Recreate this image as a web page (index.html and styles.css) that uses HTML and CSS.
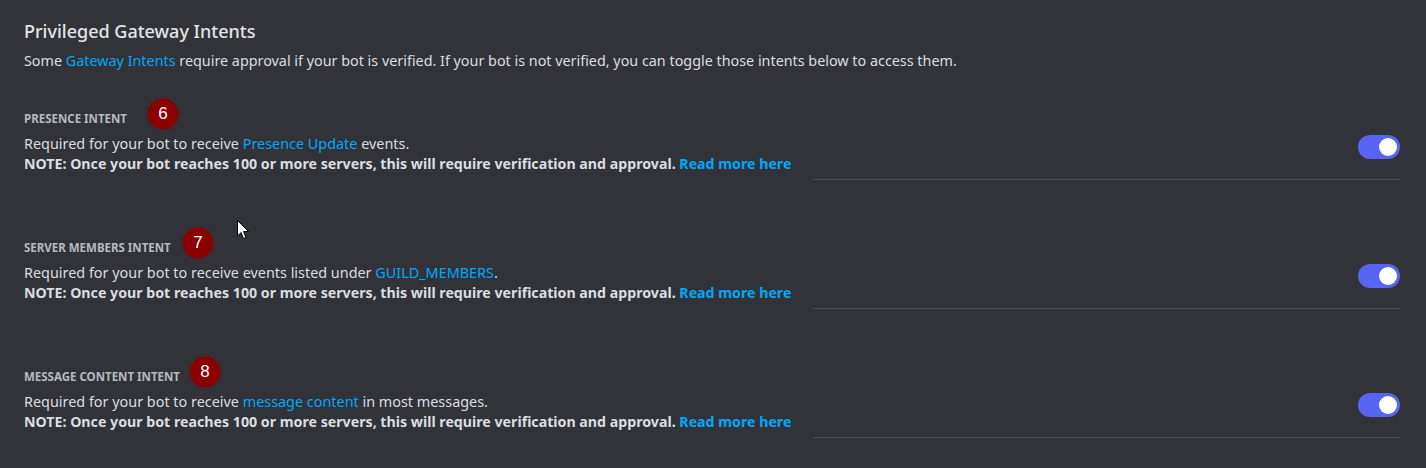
FILE: index.html
```html
<!DOCTYPE html>
<html lang="en">
<head>
<meta charset="utf-8">
<title>Privileged Gateway Intents</title>
<link rel="stylesheet" href="styles.css">
</head>
<body>
<main class="page">
  <h2 class="title">Privileged Gateway Intents</h2>
  <p class="intro">Some <a class="link" href="#">Gateway Intents</a> require approval if your bot is verified. If your bot is not verified, you can toggle those intents below to access them.</p>

  <section class="intent">
    <div class="intent-head"><span class="label">PRESENCE INTENT</span><span class="badge badge-6">6</span></div>
    <div class="intent-row">
      <div class="intent-text">
        <div>Required for your bot to receive <a class="link" href="#">Presence Update</a> events.</div>
        <div class="note">NOTE: Once your bot reaches 100 or more servers, this will require verification and approval. <a class="link strong" href="#">Read more here</a></div>
      </div>
      <span class="toggle"><span class="knob"></span></span>
    </div>
    <div class="divider"></div>
  </section>

  <section class="intent">
    <div class="intent-head"><span class="label">SERVER MEMBERS INTENT</span><span class="badge badge-7">7</span></div>
    <div class="intent-row">
      <div class="intent-text">
        <div>Required for your bot to receive events listed under <a class="link" href="#">GUILD_MEMBERS</a>.</div>
        <div class="note">NOTE: Once your bot reaches 100 or more servers, this will require verification and approval. <a class="link strong" href="#">Read more here</a></div>
      </div>
      <span class="toggle"><span class="knob"></span></span>
    </div>
    <div class="divider"></div>
  </section>

  <section class="intent">
    <div class="intent-head"><span class="label">MESSAGE CONTENT INTENT</span><span class="badge badge-8">8</span></div>
    <div class="intent-row">
      <div class="intent-text">
        <div>Required for your bot to receive <a class="link" href="#">message content</a> in most messages.</div>
        <div class="note">NOTE: Once your bot reaches 100 or more servers, this will require verification and approval. <a class="link strong" href="#">Read more here</a></div>
      </div>
      <span class="toggle"><span class="knob"></span></span>
    </div>
    <div class="divider"></div>
  </section>

  <svg class="cursor" width="13" height="20" viewBox="0 0 13 20" aria-hidden="true">
    <path d="M0.5 0.5 L0.5 16 L4 12.5 L6.5 18.5 L9 17.5 L6.5 11.5 L11.5 11.5 Z" fill="#ffffff" stroke="#000000" stroke-width="1" stroke-linejoin="miter"/>
  </svg>
</main>
</body>
</html>
```

FILE: styles.css
```css
html, body {
  margin: 0;
  padding: 0;
  background: #313338;
}

body {
  font-family: "Noto Sans", "Open Sans", sans-serif;
  color: #dbdee1;
  font-size: 14.4px;
  line-height: 20px;
}

.page {
  position: relative;
  padding: 19px 26px 0 24px;
  height: 468px;
  box-sizing: border-box;
  overflow: hidden;
}

.title {
  margin: 0;
  font-size: 18px;
  line-height: 24px;
  font-weight: 500;
  color: #e3e5e8;
}

.intro {
  margin: 8px 0 0;
  font-size: 14.35px;
  color: #dbdee1;
}

.link {
  color: #00a8fc;
  text-decoration: none;
}

.link.strong {
  font-weight: 700;
}

.intent {
  position: relative;
}

.intro + .intent {
  margin-top: 39px;
}

.intent-head {
  position: relative;
  height: 16px;
  line-height: 16px;
}

.label {
  font-size: 11.5px;
  font-weight: 700;
  color: #b5bac1;
}

.badge {
  position: absolute;
  top: -11px;
  width: 30px;
  height: 30px;
  border-radius: 50%;
  background: #8b0000;
  box-shadow: 0 0 2px 1px rgba(140, 0, 0, 0.5);
  color: #ffffff;
  font-family: "Liberation Sans", Arial, sans-serif;
  font-size: 17px;
  line-height: 30px;
  text-align: center;
}

.badge-6 { left: 124px; }
.badge-7 { left: 159px; }
.badge-8 { left: 166px; }

.intent-row {
  display: flex;
  justify-content: space-between;
  align-items: flex-start;
  margin-top: 8px;
}

.intent-text {
  color: #dbdee1;
}

.note {
  font-size: 14.2px;
  font-weight: 700;
  color: #dbdee1;
}

.toggle {
  position: relative;
  width: 42px;
  height: 24px;
  margin-top: 1px;
  border-radius: 12px;
  background: #5865f2;
  flex: none;
}

.knob {
  position: absolute;
  top: 3px;
  right: 3px;
  width: 18px;
  height: 18px;
  border-radius: 50%;
  background: #ffffff;
}

.divider {
  height: 1px;
  margin: 5px 0 59px 789px;
  background: #4e5058;
}

.cursor {
  position: absolute;
  left: 237px;
  top: 220px;
}
```
